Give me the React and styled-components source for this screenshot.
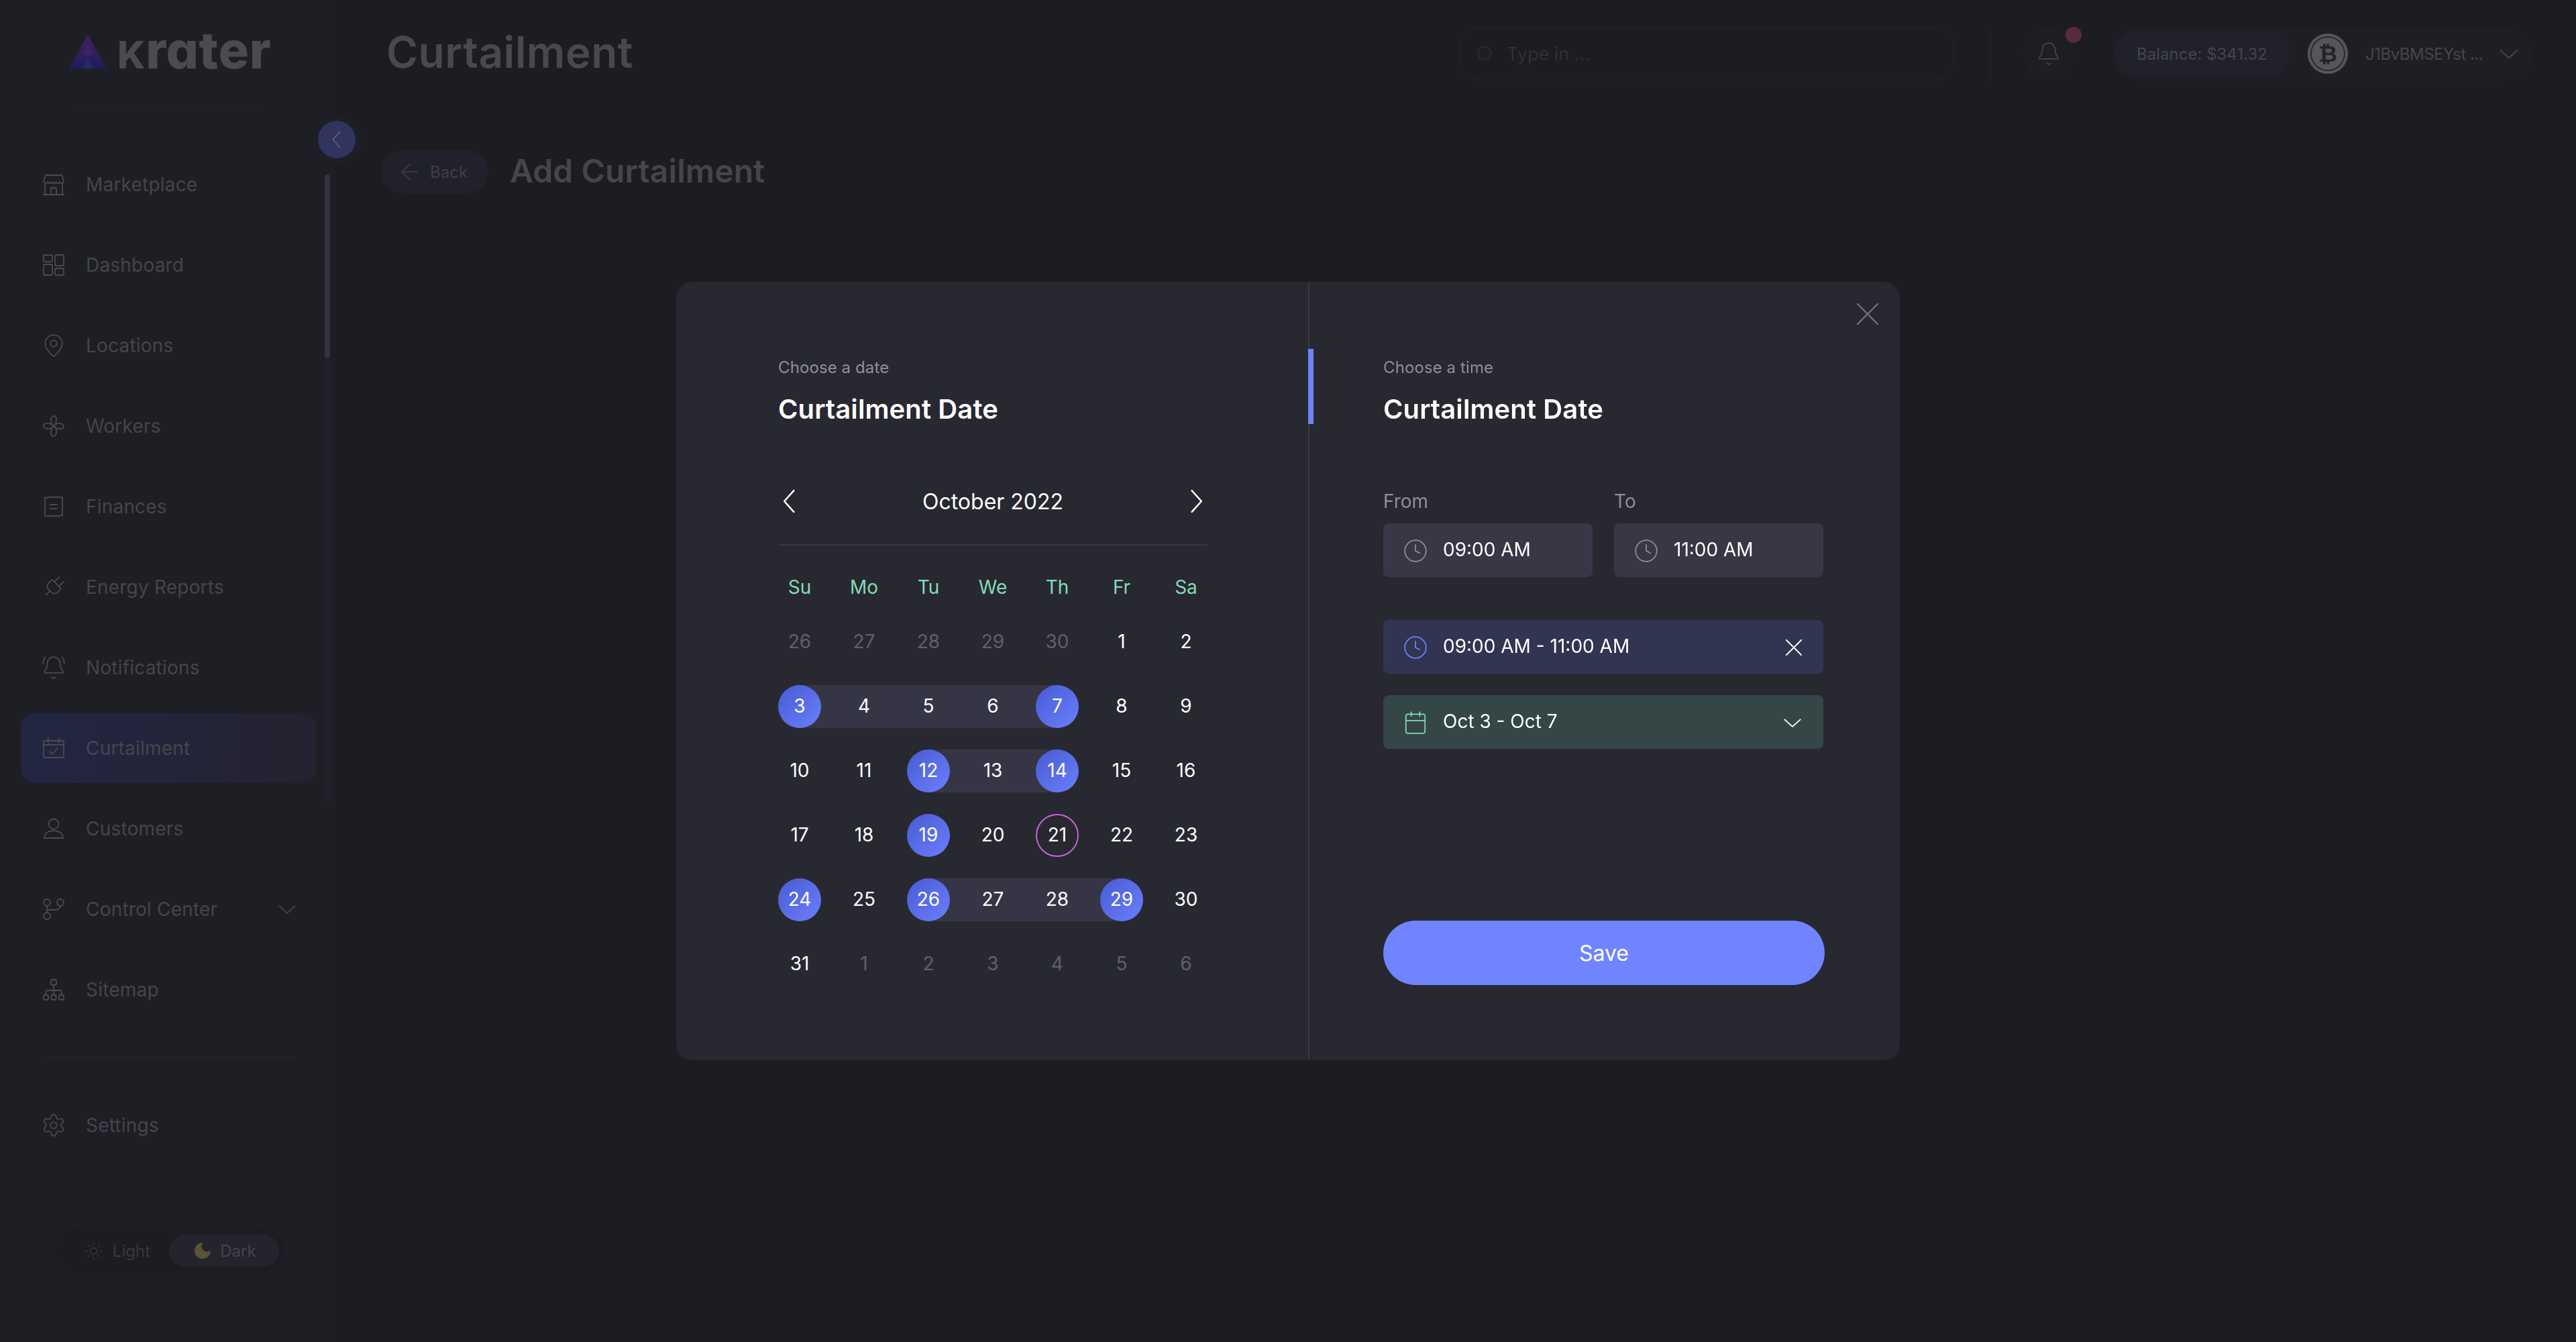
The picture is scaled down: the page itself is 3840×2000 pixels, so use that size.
import styled, { createGlobalStyle } from 'styled-components';
import {
  ArrowLeft,
  Bell,
  BellRing,
  Calendar,
  Clock,
  MapPin,
  Moon,
  Plug,
  Search,
  Settings,
  Sun,
} from 'lucide-react';

const GlobalStyle = createGlobalStyle`
  html, body {
    margin: 0;
    padding: 0;
    background: #1c1c21;
  }
  * {
    box-sizing: border-box;
  }
  body {
    font-family: Inter, "Liberation Sans", sans-serif;
  }
`;

const Chevron = ({ dir = 'down', size = 24 }) => {
  const points = {
    down: '2,8 12,17 22,8',
    left: '16,2 7,12 16,22',
    right: '8,2 17,12 8,22',
  };
  return (
    <svg width={size} height={size} viewBox="0 0 24 24" fill="none" stroke="currentColor" strokeWidth="1.6" strokeLinecap="round" strokeLinejoin="round">
      <polyline points={points[dir]} />
    </svg>
  );
};

const Cross = ({ size = 32 }) => (
  <svg width={size} height={size} viewBox="0 0 32 32" fill="none" stroke="currentColor" strokeWidth="2.4" strokeLinecap="round">
    <path d="M1 1 31 31M31 1 1 31" />
  </svg>
);

const Outline = ({ children }) => (
  <svg width="32" height="32" viewBox="0 0 32 32" fill="none" stroke="currentColor" strokeWidth="1.8" strokeLinecap="round" strokeLinejoin="round">
    {children}
  </svg>
);

const StoreIcon = () => (
  <Outline>
    <path d="M4 2h24l3 9c-1 4-5 4-6 1-1 3-5 3-6 0-1 3-5 3-6 0-1 3-5 3-6 0-1 3-5 3-6-1Z" />
    <path d="M3 14v16M29 14v16M1 31h30" />
    <path d="M12 31V21h8v10" />
  </Outline>
);

const DashboardIcon = () => (
  <Outline>
    <rect x="1" y="1" width="13" height="10" rx="1.5" />
    <rect x="18" y="1" width="13" height="16" rx="1.5" />
    <rect x="1" y="15" width="13" height="16" rx="1.5" />
    <rect x="18" y="21" width="13" height="10" rx="1.5" />
  </Outline>
);

const FanIcon = () => (
  <Outline>
    {[0, 90, 180, 270].map(angle => (
      <path key={angle} transform={`rotate(${angle} 16 16)`} d="M16 16C11 13 10 3 16 1c5-1 6 9 0 15Z" />
    ))}
  </Outline>
);

const ReceiptIcon = () => (
  <Outline>
    <path d="M3 2c2 2 3 2 4.500 0s3 2 4.500 0 3 2 4 0 3 2 4.500 0 3 2 4.500 0 3 2 4 0v28c-2-2-3-2-4 0s-3-2-4.500 0-3-2-4.500 0-3-2-4 0-3-2-4.500 0-3-2-4.500 0Z" />
    <path d="M11 13h10M11 19h10" />
  </Outline>
);

const CalendarCheckIcon = () => (
  <Outline>
    <rect x="1" y="5" width="30" height="25" rx="1.5" />
    <path d="M1 11h30M8 1v7M24 1v7M10 21l4 4 8-9" />
  </Outline>
);

const PersonIcon = () => (
  <Outline>
    <circle cx="16" cy="9" r="7.500" />
    <path d="M2 30c0-7 6-11 14-11s14 4 14 11Z" />
  </Outline>
);

const BranchIcon = () => (
  <Outline>
    <circle cx="6" cy="6" r="5" />
    <circle cx="26" cy="6" r="5" />
    <circle cx="6" cy="26" r="5" />
    <path d="M6 11v10M6 17h14c3 0 5-3 6-6" />
  </Outline>
);

const SitemapIcon = () => (
  <Outline>
    <rect x="12" y="1" width="8" height="8" rx="1.500" />
    <rect x="1" y="24" width="7" height="7" rx="1.500" />
    <rect x="12.500" y="24" width="7" height="7" rx="1.500" />
    <rect x="24" y="24" width="7" height="7" rx="1.500" />
    <path d="M16 9v15M4.500 24v-5c0-1 1-2 2-2h19c1 0 2 1 2 2v5" />
  </Outline>
);

const LogoMark = () => (
  <svg width="56" height="50" viewBox="0 0 56 50">
    <defs>
      <linearGradient id="logoFill" x1="0" y1="0" x2="0" y2="1">
        <stop offset="0" stopColor="#451f5e" />
        <stop offset="1" stopColor="#1c1e5c" />
      </linearGradient>
    </defs>
    <polygon points="28,0 56,50 0,50" fill="url(#logoFill)" />
    <polygon points="28,12 37,30 19,30" fill="#4b2568" opacity="0.6" />
    <polygon points="28,32 36,50 20,50" fill="#272666" />
  </svg>
);

const navItems = [
  { label: 'Marketplace', icon: <StoreIcon /> },
  { label: 'Dashboard', icon: <DashboardIcon /> },
  { label: 'Locations', icon: <MapPin size={38} strokeWidth={1.1} /> },
  { label: 'Workers', icon: <FanIcon /> },
  { label: 'Finances', icon: <ReceiptIcon /> },
  { label: 'Energy Reports', icon: <Plug size={38} strokeWidth={1.1} />, tilt: true },
  { label: 'Notifications', icon: <BellRing size={38} strokeWidth={1.1} /> },
  { label: 'Curtailment', icon: <CalendarCheckIcon />, active: true },
  { label: 'Customers', icon: <PersonIcon /> },
  { label: 'Control Center', icon: <BranchIcon />, arrow: true },
  { label: 'Sitemap', icon: <SitemapIcon /> },
];

const weekDays = ['Su', 'Mo', 'Tu', 'We', 'Th', 'Fr', 'Sa'];

// n: number, o: outside month, s: selected, b: band start/mid/end, t: today
const weeks = [
  [{ n: 26, o: 1 }, { n: 27, o: 1 }, { n: 28, o: 1 }, { n: 29, o: 1 }, { n: 30, o: 1 }, { n: 1 }, { n: 2 }],
  [{ n: 3, s: 1, b: 'start' }, { n: 4, b: 'mid' }, { n: 5, b: 'mid' }, { n: 6, b: 'mid' }, { n: 7, s: 1, b: 'end' }, { n: 8 }, { n: 9 }],
  [{ n: 10 }, { n: 11 }, { n: 12, s: 1, b: 'start' }, { n: 13, b: 'mid' }, { n: 14, s: 1, b: 'end' }, { n: 15 }, { n: 16 }],
  [{ n: 17 }, { n: 18 }, { n: 19, s: 1 }, { n: 20 }, { n: 21, t: 1 }, { n: 22 }, { n: 23 }],
  [{ n: 24, s: 1 }, { n: 25 }, { n: 26, s: 1, b: 'start' }, { n: 27, b: 'mid' }, { n: 28, b: 'mid' }, { n: 29, s: 1, b: 'end' }, { n: 30 }],
  [{ n: 31 }, { n: 1, o: 1 }, { n: 2, o: 1 }, { n: 3, o: 1 }, { n: 4, o: 1 }, { n: 5, o: 1 }, { n: 6, o: 1 }],
];

const App = () => (
  <>
    <GlobalStyle />
    <Shell>
      <Sidebar>
        <Brand>
          <LogoMark />
          <BrandName>
            <BrandK>k</BrandK>rater
          </BrandName>
        </Brand>
        <BrandRule />
        <CollapseButton>
          <Chevron dir="left" size={28} />
        </CollapseButton>
        <ScrollTrack>
          <ScrollThumb />
        </ScrollTrack>
        <Nav>
          {navItems.map(item => (
            <NavItem key={item.label} $active={item.active}>
              <NavIcon $tilt={item.tilt}>{item.icon}</NavIcon>
              {item.label}
              {item.arrow && (
                <NavArrow>
                  <Chevron size={28} />
                </NavArrow>
              )}
            </NavItem>
          ))}
        </Nav>
        <SideDivider />
        <NavItem>
          <NavIcon>
            <Settings size={38} strokeWidth={1.1} />
          </NavIcon>
          Settings
        </NavItem>
        <ThemeSwitch>
          <ThemeOption>
            <Sun size={29} strokeWidth={1.2} />
            Light
          </ThemeOption>
          <ThemeOption $active>
            <MoonIcon>
              <Moon size={32} fill="currentColor" strokeWidth={0} />
            </MoonIcon>
            Dark
          </ThemeOption>
        </ThemeSwitch>
      </Sidebar>

      <Main>
        <Header>
          <PageTitle>Curtailment</PageTitle>
          <SearchBox>
            <SearchIcon>
              <Search size={28} strokeWidth={1.3} />
            </SearchIcon>
            Type in ...
          </SearchBox>
          <HeaderRule />
          <BellButton>
            <Bell size={38} strokeWidth={1.1} />
            <BellDot />
          </BellButton>
          <Wallet>
            <Balance>Balance: $341.32</Balance>
            <Coin>₿</Coin>
            <Address>J1BvBMSEYst ...</Address>
            <WalletArrow>
              <Chevron size={30} />
            </WalletArrow>
          </Wallet>
        </Header>
        <SubHeader>
          <BackButton>
            <BackIcon>
              <ArrowLeft size={40} strokeWidth={1} />
            </BackIcon>
            Back
          </BackButton>
          <SubTitle>Add Curtailment</SubTitle>
        </SubHeader>
      </Main>
    </Shell>

    <Overlay>
      <Modal>
        <CloseButton>
          <Cross />
        </CloseButton>
        <DatePanel>
          <Overline>Choose a date</Overline>
          <PanelTitle>Curtailment Date</PanelTitle>
          <MonthBar>
            <MonthArrow>
              <Chevron dir="left" size={38} />
            </MonthArrow>
            October 2022
            <MonthArrow>
              <Chevron dir="right" size={38} />
            </MonthArrow>
          </MonthBar>
          <WeekRow>
            {weekDays.map(d => (
              <WeekDay key={d}>{d}</WeekDay>
            ))}
          </WeekRow>
          <DayGrid>
            {weeks.flat().map((day, i) => (
              <Day key={i} $band={day.b}>
                <DayNum $selected={day.s} $outside={day.o} $today={day.t}>
                  {day.n}
                </DayNum>
              </Day>
            ))}
          </DayGrid>
        </DatePanel>

        <TimePanel>
          <AccentBar />
          <Overline>Choose a time</Overline>
          <PanelTitle>Curtailment Date</PanelTitle>
          <TimeFields>
            <TimeField>
              <FieldLabel>From</FieldLabel>
              <FieldBox>
                <FieldIcon>
                  <Clock size={38} strokeWidth={1.1} />
                </FieldIcon>
                09:00 AM
              </FieldBox>
            </TimeField>
            <TimeField>
              <FieldLabel>To</FieldLabel>
              <FieldBox>
                <FieldIcon>
                  <Clock size={38} strokeWidth={1.1} />
                </FieldIcon>
                11:00 AM
              </FieldBox>
            </TimeField>
          </TimeFields>
          <RangeRow>
            <FieldIcon $color="#6f83ff">
              <Clock size={38} strokeWidth={1.1} />
            </FieldIcon>
            09:00 AM - 11:00 AM
            <RowAction>
              <Cross size={24} />
            </RowAction>
          </RangeRow>
          <DateRow>
            <FieldIcon $color="#82dcb8">
              <Calendar size={38} strokeWidth={1.1} />
            </FieldIcon>
            Oct 3 - Oct 7
            <RowAction>
              <Chevron size={28} />
            </RowAction>
          </DateRow>
          <SaveButton>Save</SaveButton>
        </TimePanel>
      </Modal>
    </Overlay>
  </>
);

const Shell = styled.div`
  display: flex;
  height: 2000px;
  background: #1c1c21;
  color: #45454c;
  overflow: hidden;
`;

const Sidebar = styled.aside`
  position: relative;
  display: flex;
  flex-direction: column;
  width: 500px;
  flex-shrink: 0;
  height: 100%;
  background: #1e1f24;
  font-size: 28px;
`;

const Brand = styled.div`
  display: flex;
  align-items: center;
  gap: 16px;
  height: 158px;
  padding: 0 0 5px 103px;
  svg {
    flex-shrink: 0;
  }
`;

const BrandRule = styled.div`
  height: 2px;
  margin: 0 108px 0 112px;
  background: #222329;
`;

const BrandName = styled.div`
  font-size: 76px;
  font-weight: 800;
  line-height: 1;
  letter-spacing: 0.6px;
  color: #4a4a50;
  font-feature-settings: 'cv11';
  margin-top: -6px;
`;

const BrandK = styled.span`
  font-size: 0.74em;
  text-transform: uppercase;
`;

const CollapseButton = styled.div`
  position: absolute;
  top: 180px;
  left: 474px;
  z-index: 2;
  display: flex;
  align-items: center;
  justify-content: center;
  width: 56px;
  height: 56px;
  border-radius: 50%;
  background: #30345f;
  box-shadow: 0 0 0 9px #1e1f24;
  color: #5a5e80;
`;

const ScrollTrack = styled.div`
  position: absolute;
  top: 260px;
  left: 484px;
  width: 8px;
  height: 938px;
  border-radius: 4px;
  background: #212229;
`;

const ScrollThumb = styled.div`
  height: 273px;
  border-radius: 4px;
  background: #33343d;
`;

const Nav = styled.nav`
  display: flex;
  flex-direction: column;
  gap: 16px;
  margin-top: 63px;
`;

const NavItem = styled.div`
  display: flex;
  align-items: center;
  gap: 32px;
  width: 440px;
  height: 104px;
  margin-left: 32px;
  padding-left: 32px;
  border-radius: 20px;
  letter-spacing: 0.2px;
  background: ${props =>
    props.$active ? 'linear-gradient(90deg, #232643, #23222f)' : 'transparent'};
`;

const NavIcon = styled.span`
  display: flex;
  align-items: center;
  justify-content: center;
  width: 32px;
  height: 32px;
  color: #4a4a50;
  transform: ${props => (props.$tilt ? 'rotate(45deg)' : 'none')};
  svg {
    flex-shrink: 0;
  }
`;

const NavArrow = styled.span`
  display: flex;
  margin-left: auto;
  margin-right: 30px;
`;

const SideDivider = styled.div`
  height: 2px;
  margin: 48px 60px 48px 63px;
  background: #22232a;
`;

const ThemeSwitch = styled.div`
  display: flex;
  align-items: center;
  justify-content: flex-end;
  gap: 28px;
  width: 341px;
  height: 64px;
  margin: auto 0 104px 82px;
  padding-right: 7px;
  border-radius: 32px;
  background: #1c1c21;
  font-size: 24px;
  color: #38383f;
`;

const ThemeOption = styled.div`
  display: flex;
  align-items: center;
  justify-content: center;
  gap: ${props => (props.$active ? '10px' : '14px')};
  height: 48px;
  width: ${props => (props.$active ? '164px' : 'auto')};
  border-radius: 24px;
  background: ${props => (props.$active ? '#23242e' : 'transparent')};
  color: ${props => (props.$active ? '#45454c' : '#38383f')};
`;

const MoonIcon = styled.span`
  display: flex;
  color: #5c5238;
`;

const Main = styled.main`
  flex: 1;
  display: flex;
  flex-direction: column;
`;

const Header = styled.header`
  display: flex;
  align-items: center;
  height: 160px;
  padding: 0 66px 0 76px;
`;

const PageTitle = styled.h1`
  margin: -6px auto 0 0;
  font-size: 64px;
  font-weight: 600;
  letter-spacing: 0.4px;
  color: #48484e;
`;

const SearchBox = styled.div`
  display: flex;
  align-items: center;
  gap: 20px;
  width: 740px;
  height: 80px;
  padding-left: 22px;
  border: 2px solid #212229;
  border-radius: 32px;
  font-size: 27px;
  color: #303036;
`;

const SearchIcon = styled.span`
  display: flex;
  transform: scaleX(-1);
`;

const HeaderRule = styled.div`
  width: 2px;
  height: 80px;
  margin: 0 49px 0 51px;
  background: #212229;
`;

const BellButton = styled.div`
  position: relative;
  display: flex;
  align-items: center;
  justify-content: center;
  width: 76px;
  height: 80px;
  border-radius: 50%;
  background: #1e1f24;
  margin-right: 57px;
`;

const BellDot = styled.span`
  position: absolute;
  top: 0;
  right: -11px;
  width: 24px;
  height: 24px;
  border-radius: 50%;
  background: #5a2a3d;
`;

const Wallet = styled.div`
  display: flex;
  align-items: center;
  height: 80px;
  width: 625px;
  padding-left: 3px;
  border-radius: 40px;
  background: #1e1f24;
  font-size: 24px;
`;

const Balance = styled.div`
  display: flex;
  align-items: center;
  justify-content: center;
  width: 261px;
  height: 68px;
  border-radius: 34px;
  background: #20212a;
`;

const Coin = styled.div`
  display: flex;
  align-items: center;
  justify-content: center;
  width: 60px;
  height: 60px;
  margin: 0 26px 0 27px;
  border-radius: 50%;
  background: #55555b;
  box-shadow: inset 0 0 0 4px #55555b, inset 0 0 0 6px #2a2a2f;
  font-family: "DejaVu Sans", sans-serif;
  font-size: 34px;
  font-weight: 700;
  color: #232328;
`;

const Address = styled.div`
  white-space: nowrap;
  letter-spacing: -0.5px;
`;

const WalletArrow = styled.span`
  display: flex;
  margin-left: 24px;
`;

const SubHeader = styled.div`
  display: flex;
  align-items: center;
  gap: 32px;
  margin-top: 64px;
  padding-left: 68px;
`;

const BackButton = styled.div`
  display: flex;
  align-items: center;
  gap: 16px;
  height: 64px;
  width: 160px;
  padding-left: 29px;
  border-radius: 32px;
  background: #20212a;
  font-size: 24px;
  color: #3f3f46;
`;

const BackIcon = styled.span`
  display: flex;
  margin: 0 -6px;
`;

const SubTitle = styled.h2`
  margin: -3px 0 0;
  font-size: 48px;
  font-weight: 600;
  letter-spacing: 0.1px;
  color: #45454c;
`;

const Overlay = styled.div`
  position: fixed;
  inset: 0;
  display: flex;
  align-items: center;
  justify-content: center;
`;

const Modal = styled.section`
  position: relative;
  display: flex;
  width: 1824px;
  height: 1160px;
  border-radius: 24px;
  background: #282831;
`;

const CloseButton = styled.div`
  position: absolute;
  top: 32px;
  right: 32px;
  display: flex;
  color: #73737d;
`;

const DatePanel = styled.div`
  width: 944px;
  padding: 112px 152px 0;
  border-right: 2px solid #393945;
`;

const TimePanel = styled.div`
  position: relative;
  display: flex;
  flex-direction: column;
  flex: 1;
  padding: 112px 112px 112px 110px;
`;

const AccentBar = styled.div`
  position: absolute;
  top: 100px;
  left: -2px;
  width: 8px;
  height: 112px;
  background: #6f83ff;
`;

const Overline = styled.div`
  font-size: 24px;
  line-height: 32px;
  letter-spacing: 0.1px;
  color: #8f8f9a;
`;

const PanelTitle = styled.h3`
  margin: 22px 0 0;
  font-size: 40px;
  line-height: 48px;
  font-weight: 600;
  letter-spacing: 0.1px;
  color: #fff;
`;

const MonthBar = styled.div`
  display: flex;
  align-items: center;
  justify-content: space-between;
  width: 640px;
  height: 90px;
  margin-top: 89px;
  padding: 0 0 40px;
  border-bottom: 2px solid #373742;
  font-size: 32px;
  color: #fff;
`;

const MonthArrow = styled.span`
  display: flex;
  margin: 0 -2px;
  color: #fff;
`;

const WeekRow = styled.div`
  display: grid;
  grid-template-columns: repeat(7, 64px);
  column-gap: 32px;
  margin-top: 42px;
`;

const WeekDay = styled.div`
  font-size: 28px;
  line-height: 40px;
  text-align: center;
  color: #82dcb8;
`;

const DayGrid = styled.div`
  display: grid;
  grid-template-columns: repeat(7, 64px);
  grid-auto-rows: 64px;
  gap: 32px;
  margin-top: 30px;
`;

const bandEdges = {
  start: 'left: 50%; right: -32px;',
  mid: 'left: 0; right: -32px;',
  end: 'left: 0; right: 50%;',
};

const Day = styled.div`
  position: relative;
  width: 64px;
  height: 64px;
  &::before {
    content: '';
    position: absolute;
    top: 0;
    bottom: 0;
    background: #363545;
    ${props => (props.$band ? bandEdges[props.$band] : 'display: none;')}
  }
`;

const DayNum = styled.div`
  position: relative;
  display: flex;
  align-items: center;
  justify-content: center;
  width: 64px;
  height: 64px;
  padding-bottom: 3px;
  border-radius: 50%;
  font-size: 28px;
  color: ${props => (props.$outside ? '#60606b' : '#fff')};
  background: ${props =>
    props.$selected ? 'linear-gradient(135deg, #485bd3, #6a7ffb)' : 'transparent'};
  border: ${props => (props.$today ? '2px solid #c765d8' : 'none')};
`;

const TimeFields = styled.div`
  display: flex;
  gap: 32px;
  margin-top: 97px;
`;

const TimeField = styled.div`
  width: 312px;
`;

const FieldLabel = styled.div`
  margin-bottom: 17px;
  font-size: 28px;
  line-height: 32px;
  color: #8f8f9a;
`;

const FieldBox = styled.div`
  display: flex;
  align-items: center;
  gap: 25px;
  height: 80px;
  padding: 0 32px 3px;
  border-radius: 8px;
  background: #373746;
  font-size: 28px;
  color: #fff;
`;

const FieldIcon = styled.span`
  display: flex;
  align-items: center;
  justify-content: center;
  width: 32px;
  height: 32px;
  margin-top: 4px;
  color: ${props => props.$color || '#8f8f9a'};
  svg {
    flex-shrink: 0;
  }
`;

const RangeRow = styled(FieldBox)`
  margin-top: 64px;
  width: 656px;
  background: #323552;
`;

const DateRow = styled(FieldBox)`
  margin-top: 32px;
  width: 656px;
  background: #344645;
`;

const RowAction = styled.span`
  display: flex;
  margin: 4px 0 0 auto;
`;

const SaveButton = styled.button`
  width: 658px;
  height: 96px;
  margin-top: auto;
  border: none;
  border-radius: 48px;
  background: #7084ff;
  font-family: inherit;
  font-size: 32px;
  color: #fff;
`;

export default App;
